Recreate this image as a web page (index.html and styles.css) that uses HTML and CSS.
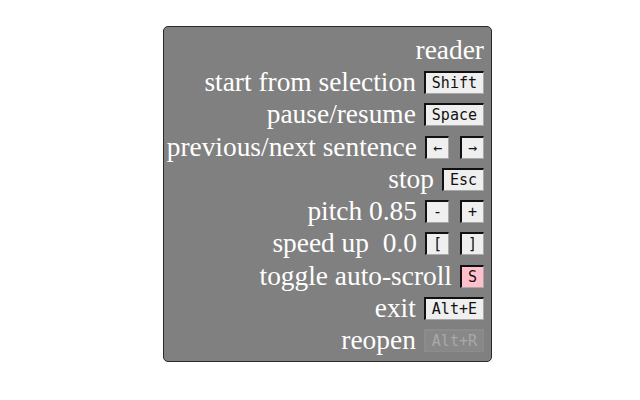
FILE: index.html
```html
<!DOCTYPE html>
<html lang="en">
<head>
  <meta charset="UTF-8" />
  <title>reader</title>
  <link rel="stylesheet" href="styles.css">
</head>
<body>
  <div class="panel">
    <div class="row">reader</div>
    <div class="row">start from selection <kbd>Shift</kbd></div>
    <div class="row">pause/resume <kbd>Space</kbd></div>
    <div class="row">previous/next sentence <kbd>←</kbd><kbd>→</kbd></div>
    <div class="row">stop <kbd>Esc</kbd></div>
    <div class="row">pitch 0.85 <kbd>-</kbd><kbd>+</kbd></div>
    <div class="row"><span class="pre">speed up  0.0</span> <kbd>[</kbd><kbd>]</kbd></div>
    <div class="row">toggle auto-scroll <kbd class="on">S</kbd></div>
    <div class="row">exit <kbd>Alt+E</kbd></div>
    <div class="row">reopen <kbd class="off">Alt+R</kbd></div>
  </div>
</body>
</html>
```

FILE: styles.css
```css
body {
  margin: 0;
  background: #fff;
}

.panel {
  box-sizing: border-box;
  width: 329px;
  height: 336px;
  margin: 26px 0 0 163px;
  padding: 7px 7px 4px 5px;
  background: #808080;
  border: 1px solid #2a2a2a;
  border-radius: 5px;
  color: #fff;
  font-family: "Liberation Serif", serif;
  font-size: 27.4px;
}

.row {
  height: 32.3px;
  display: flex;
  align-items: center;
  justify-content: flex-end;
  white-space: nowrap;
}

.pre {
  white-space: pre;
}

kbd {
  box-sizing: border-box;
  height: 23px;
  margin-left: 8px;
  padding: 0 6px;
  display: inline-flex;
  align-items: center;
  background: #efefef;
  color: #111;
  font-family: "DejaVu Sans Mono", monospace;
  font-size: 15px;
  border: 1px solid #a8a8a8;
  border-top: 2px solid #111;
  border-left: 2px solid #111;
}

kbd + kbd {
  margin-left: 11px;
}

kbd.on {
  background: #ffc0cb;
}

kbd.off {
  background: #888;
  color: #a9a9a9;
  border-color: #8c8c8c;
}
```
